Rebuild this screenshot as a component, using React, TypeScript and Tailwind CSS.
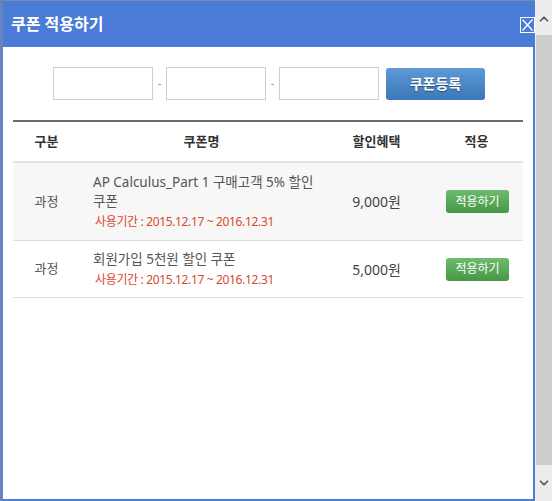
import { ChevronDown, ChevronUp } from 'lucide-react';

type Coupon = {
    kind: string;
    name: string[];
    period: string;
    discount: string;
};

const coupons: Coupon[] = [
    {
        kind: '과정',
        name: ['AP Calculus_Part 1 구매고객 5% 할인', '쿠폰'],
        period: '사용기간 : 2015.12.17 ~ 2016.12.31',
        discount: '9,000원',
    },
    {
        kind: '과정',
        name: ['회원가입 5천원 할인 쿠폰'],
        period: '사용기간 : 2015.12.17 ~ 2016.12.31',
        discount: '5,000원',
    },
];

const CloseIcon = () => (
    <svg width="13" height="14" viewBox="0 0 13 14" fill="none" stroke="currentColor" strokeWidth={1.3}>
        <path d="M1.5 1.5L11.5 12.5M11.5 1.5L1.5 12.5" />
    </svg>
);

const CodeInput = () => (
    <input type="text" className="h-[33px] w-[100px] border border-[#cfcfcf] bg-white outline-none" />
);

export default function App() {
    return (
        <div
            className="flex h-[501px] w-[552px] overflow-hidden bg-[#f0f0f0]"
            style={{ fontFamily: '"Noto Sans", "Noto Sans CJK KR", sans-serif' }}
        >
            {/* Popup window */}
            <div className="flex w-[535px] flex-col border-t border-l-[3px] border-t-[#7b8aa6] border-l-[#6683bd]">
                <div className="flex flex-1 flex-col border-r-2 border-b-2 border-[#4a7bd6] bg-white">
                    {/* Title bar */}
                    <div className="flex h-[46px] shrink-0 items-center justify-between bg-[#4a7bd6] pl-[8px]">
                        <h1 className="text-[16px] font-bold text-white">쿠폰 적용하기</h1>
                        <button className="-mr-[2px] mt-[2px] flex h-[16px] w-[15px] items-center justify-center border border-white text-white">
                            <CloseIcon />
                        </button>
                    </div>

                    {/* Coupon code entry */}
                    <div className="mt-[20px] flex items-center justify-center gap-[4px] pl-[2px]">
                        <CodeInput />
                        <span className="w-[5px] text-center text-[11px] text-[#888]">-</span>
                        <CodeInput />
                        <span className="w-[5px] text-center text-[11px] text-[#888]">-</span>
                        <CodeInput />
                        <button className="ml-[3px] h-[32px] w-[99px] rounded-[3px] bg-gradient-to-b from-[#5d9ad6] to-[#3c77b6] text-[14px] font-bold text-white [text-shadow:0_1px_1px_rgba(0,0,0,0.4)]">
                            쿠폰등록
                        </button>
                    </div>

                    {/* Coupon table */}
                    <div className="mx-[10px] mt-[20px] border-t-2 border-[#6b6b6b] text-[13px] text-[#555]">
                        <div className="flex h-[41px] items-center border-b-2 border-[#e2e2e2] font-bold text-[#333]">
                            <div className="w-[67px] text-center">구분</div>
                            <div className="w-[243px] text-center">쿠폰명</div>
                            <div className="w-[107px] text-center">할인혜택</div>
                            <div className="flex-1 text-center">적용</div>
                        </div>
                        {coupons.map((c, i) => (
                            <div
                                key={i}
                                className={`flex items-center border-b border-[#dedede] ${i === 0 ? 'bg-[#f7f7f7] py-[10px]' : 'bg-white py-[9px]'}`}
                            >
                                <div className="w-[67px] text-center">{c.kind}</div>
                                <div className="w-[243px] pl-[13px] text-[13.5px] leading-[19px]">
                                    {c.name.map((line) => (
                                        <div key={line}>{line}</div>
                                    ))}
                                    <div className="mt-[3px] pl-[2px] text-[12px] leading-[16px] tracking-[-0.35px] text-[#d9482c]">
                                        {c.period}
                                    </div>
                                </div>
                                <div className="w-[107px] text-center text-[14px] text-[#444]">{c.discount}</div>
                                <div className="flex flex-1 justify-center pl-[2px]">
                                    <button className="h-[23px] w-[63px] rounded-[3px] bg-gradient-to-b from-[#6dbb6d] to-[#479747] text-[12px] text-white">
                                        적용하기
                                    </button>
                                </div>
                            </div>
                        ))}
                    </div>
                </div>
            </div>

            {/* Scrollbar */}
            <div className="ml-px flex w-[16px] flex-col bg-[#ececec]">
                <div className="flex h-[35px] items-center justify-center pt-[2px] text-[#555]">
                    <ChevronUp size={14} strokeWidth={3} />
                </div>
                <div className="flex-1 bg-[#cdcdcd]" />
                <div className="flex h-[36px] items-center justify-center text-[#555]">
                    <ChevronDown size={14} strokeWidth={3} />
                </div>
            </div>
        </div>
    );
}
